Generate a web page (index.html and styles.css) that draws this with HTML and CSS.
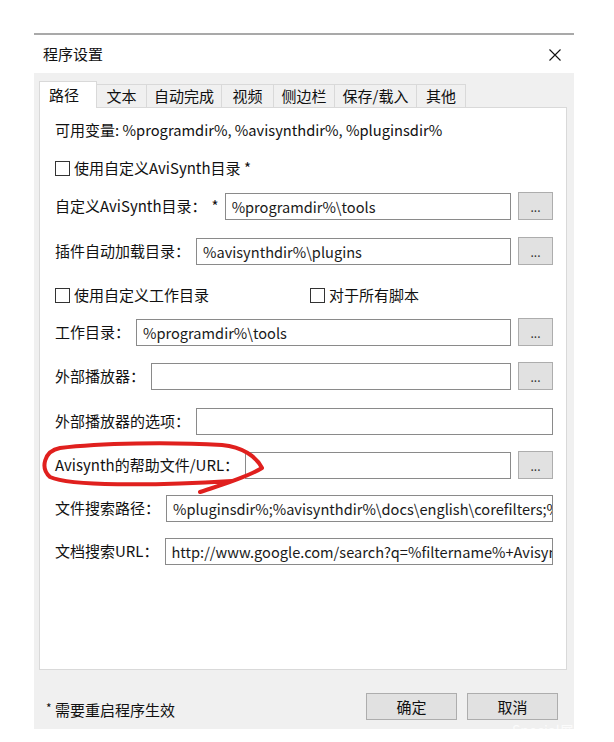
FILE: index.html
```html
<!DOCTYPE html>
<html lang="zh-CN">
<head>
<meta charset="utf-8">
<title>程序设置</title>
<link rel="stylesheet" href="styles.css">
</head>
<body>
<div class="page">
  <div class="topline"></div>
  <div class="dialog">
    <div class="titlebar">
      <span class="title">程序设置</span>
      <svg class="close" width="12" height="12" viewBox="0 0 12 12"><path d="M0.5 0.5 L11.5 11.5 M11.5 0.5 L0.5 11.5" stroke="#111" stroke-width="1.1" fill="none"/></svg>
    </div>
    <div class="body">
      <div class="tabs">
        <div class="tab active">路径</div>
        <div class="tab t-text">文本</div>
        <div class="tab t-auto">自动完成</div>
        <div class="tab t-video">视频</div>
        <div class="tab t-side">侧边栏</div>
        <div class="tab t-save">保存/载入</div>
        <div class="tab t-other">其他</div>
      </div>
      <div class="panel">
        <div class="vars">可用变量: <span class="latin">%programdir%, %avisynthdir%, %pluginsdir%</span></div>
        <div class="cbrow first">
          <span class="cb"><span class="box"></span>使用自定义AviSynth目录 *</span>
        </div>
        <div class="row r1">
          <span class="label">自定义AviSynth目录：<span class="star">*</span></span>
          <div class="input">%programdir%\tools</div>
          <div class="browse">...</div>
        </div>
        <div class="row r2">
          <span class="label">插件自动加载目录：</span>
          <div class="input">%avisynthdir%\plugins</div>
          <div class="browse">...</div>
        </div>
        <div class="cbrow second">
          <span class="cb wide"><span class="box"></span>使用自定义工作目录</span>
          <span class="cb"><span class="box"></span>对于所有脚本</span>
        </div>
        <div class="row r3">
          <span class="label">工作目录：</span>
          <div class="input">%programdir%\tools</div>
          <div class="browse">...</div>
        </div>
        <div class="row r4">
          <span class="label">外部播放器：</span>
          <div class="input"></div>
          <div class="browse">...</div>
        </div>
        <div class="row r5">
          <span class="label">外部播放器的选项：</span>
          <div class="input"></div>
        </div>
        <div class="row r6">
          <span class="label">Avisynth的帮助文件/URL：</span>
          <div class="input"></div>
          <div class="browse">...</div>
        </div>
        <div class="row r7">
          <span class="label">文件搜索路径：</span>
          <div class="input">%pluginsdir%;%avisynthdir%\docs\english\corefilters;%avisynthdir%\docs\english\externalfilters</div>
        </div>
        <div class="row r8">
          <span class="label">文档搜索URL：</span>
          <div class="input">http://www.google.com/search?q=%filtername%+Avisynth</div>
        </div>
      </div>
      <div class="footer">
        <span class="note"><span class="ast">*</span> 需要重启程序生效</span>
        <div class="btn">确定</div>
        <div class="btn">取消</div>
      </div>
    </div>
  </div>
  <svg class="annotation" width="614" height="742" viewBox="0 0 614 742">
    <path d="M200 492 C218 486 246 478 262 468 C256 456 242 447 222 445 C170 442 100 443 60 448 C44 451 40 468 50 477 C70 486 150 486 232 481" stroke="#e0201e" stroke-width="4" fill="none" stroke-linecap="round" stroke-linejoin="round"/>
  </svg>
  <div class="watermark"><span class="wm-text">Special展</span></div>
</div>
</body>
</html>
```

FILE: styles.css
```css
* { box-sizing: border-box; }
html, body {
  margin: 0;
  padding: 0;
  background: #ffffff;
}
body {
  font-family: "Noto Sans CJK SC", "Noto Sans", sans-serif;
  font-size: 15px;
  color: #111;
}
.page {
  position: relative;
  width: 614px;
  height: 742px;
  overflow: hidden;
}
.topline {
  margin: 33px 0 0 34px;
  width: 540px;
  height: 2px;
  background: #a9a9a9;
}
.dialog {
  margin-left: 34px;
  width: 540px;
}
.titlebar {
  height: 38px;
  display: flex;
  align-items: center;
  justify-content: space-between;
  padding: 0 13px 0 9px;
  background: #fff;
}
.title {
  font-size: 15px;
  line-height: 20px;
  color: #111;
}
.close { display: block; margin-top: 2px; }
.body {
  background: #f0f0f0;
  height: 656px;
  padding-top: 8px;
}
.tabs {
  display: flex;
  align-items: flex-start;
  padding-left: 5px;
  height: 26px;
  position: relative;
  z-index: 2;
}
.tab {
  margin-top: 3px;
  height: 23px;
  line-height: 21px;
  text-align: center;
  border: 1px solid #d9d9d9;
  border-bottom: none;
  border-left: none;
  background: #f0f0f0;
  font-size: 15px;
  color: #111;
  white-space: nowrap;
}
.tab.active {
  margin-top: 0;
  width: 58px;
  height: 27px;
  line-height: 25px;
  text-align: left;
  padding-left: 9px;
  border-left: 1px solid #d9d9d9;
  background: #fff;
}
.t-text { width: 50px; }
.t-auto { width: 75px; }
.t-video { width: 52px; }
.t-side { width: 61px; }
.t-save { width: 82px; }
.t-other { width: 49px; }
.panel {
  margin-left: 5px;
  width: 528px;
  height: 563px;
  background: #fff;
  border: 1px solid #d9d9d9;
  padding: 12px 13px 0 15px;
  position: relative;
  z-index: 1;
}
.vars {
  height: 20px;
  line-height: 20px;
  white-space: nowrap;
}
.vars .latin { font-size: 14.7px; }
.cbrow {
  display: flex;
  align-items: center;
  height: 18px;
  line-height: 18px;
}
.cbrow.first { margin-top: 19px; }
.cbrow.second { margin-top: 21px; }
.cb {
  display: flex;
  align-items: center;
  white-space: nowrap;
}
.cb.wide { width: 255px; }
.box {
  width: 15px;
  height: 15px;
  border: 1px solid #333;
  background: #fff;
  margin-right: 4px;
  flex: none;
}
.row {
  display: flex;
  align-items: center;
  height: 28px;
  margin-top: 16px;
}
.row.r1 { margin-top: 15px; }
.row.r2 { margin-top: 17px; }
.row.r3 { margin-top: 14px; }
.row.r5 { margin-top: 17px; }
.row.r7 { margin-top: 15px; }
.row.r8 { margin-top: 15px; }
.label {
  white-space: nowrap;
  line-height: 20px;
  margin-right: 6px;
  flex: none;
}
.star { margin-left: 5px; margin-right: 0; }
.input {
  flex: 1;
  min-width: 0;
  height: 27px;
  border: 1px solid #8a8a8a;
  background: #fff;
  padding-left: 6px;
  font-size: 14.6px;
  line-height: 25px;
  white-space: nowrap;
  overflow: hidden;
  color: #1a1a1a;
}
.browse {
  flex: none;
  width: 35px;
  height: 28px;
  margin-left: 7px;
  background: #e1e1e1;
  border: 1px solid #adadad;
  text-align: center;
  font-size: 12px;
  line-height: 28px;
  color: #333;
}
.footer {
  display: flex;
  align-items: flex-start;
  height: 59px;
  padding: 23px 16px 0 12px;
}
.note {
  flex: 1;
  white-space: nowrap;
  line-height: 20px;
  margin-top: 5px;
}
.ast {
  font-size: 12px;
  vertical-align: 3px;
}
.btn {
  width: 91px;
  height: 27px;
  background: #e1e1e1;
  border: 1px solid #adadad;
  text-align: center;
  line-height: 25px;
  font-size: 15px;
  color: #111;
}
.btn + .btn { margin-left: 10px; }
.annotation {
  position: absolute;
  left: 0;
  top: 0;
  pointer-events: none;
  z-index: 5;
}
.watermark {
  position: absolute;
  left: 512px;
  top: 719px;
  z-index: 6;
  color: rgba(255, 255, 255, 0.75);
  white-space: nowrap;
}
.wm-text {
  font-size: 14px;
  line-height: 18px;
}
```
